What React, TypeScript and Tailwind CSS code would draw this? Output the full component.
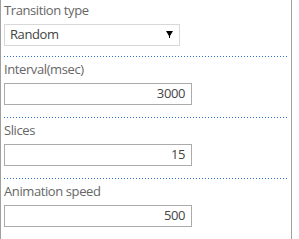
const FONT = "font-['Open_Sans','Liberation_Sans',sans-serif] tracking-[-0.4px]";

function Dotted() {
  return <div className="h-px w-full bg-[linear-gradient(to_right,#2f6fd6_1px,transparent_1px)] bg-[length:3px_1px] bg-repeat-x" />;
}

function Label({ text }: { text: string }) {
  return <div className="h-[20px] text-[13px] leading-[21px] text-[#666]">{text}</div>;
}

function NumberBox({ value }: { value: string }) {
  return (
    <div className="mt-[4px] flex h-[22px] w-[188px] items-center justify-end border border-[#ababab] bg-white pr-[6px] text-[13px] text-[#444]">
      {value}
    </div>
  );
}

const FIELDS = [
  { label: "Interval(msec)", value: "3000" },
  { label: "Slices", value: "15" },
  { label: "Animation speed", value: "500" },
];

export default function App() {
  return (
    <div className={`h-[239px] w-[299px] bg-white ${FONT}`}>
      <div className="h-full w-[292px] border-x border-[#a0a0a0] px-[3px]">
        <div className="pb-[10px]">
          <Label text="Transition type" />
          <div className="mt-[4px] flex h-[22px] w-[176px] items-center justify-between border border-[#d8d8d8] pl-[5px] pr-[6px] text-[13px] text-[#444]">
            <span>Random</span>
            <svg width="7" height="7" viewBox="0 0 7 7" className="mb-[1px]">
              <path d="M0 0H7L4 5V7H3V5Z" fill="#000" />
            </svg>
          </div>
        </div>
        {FIELDS.map((f, i) => (
          <div key={f.label}>
            <Dotted />
            <div className={`pt-[2px] ${i < FIELDS.length - 1 ? "pb-[12px]" : ""}`}>
              <Label text={f.label} />
              <NumberBox value={f.value} />
            </div>
          </div>
        ))}
      </div>
    </div>
  );
}
